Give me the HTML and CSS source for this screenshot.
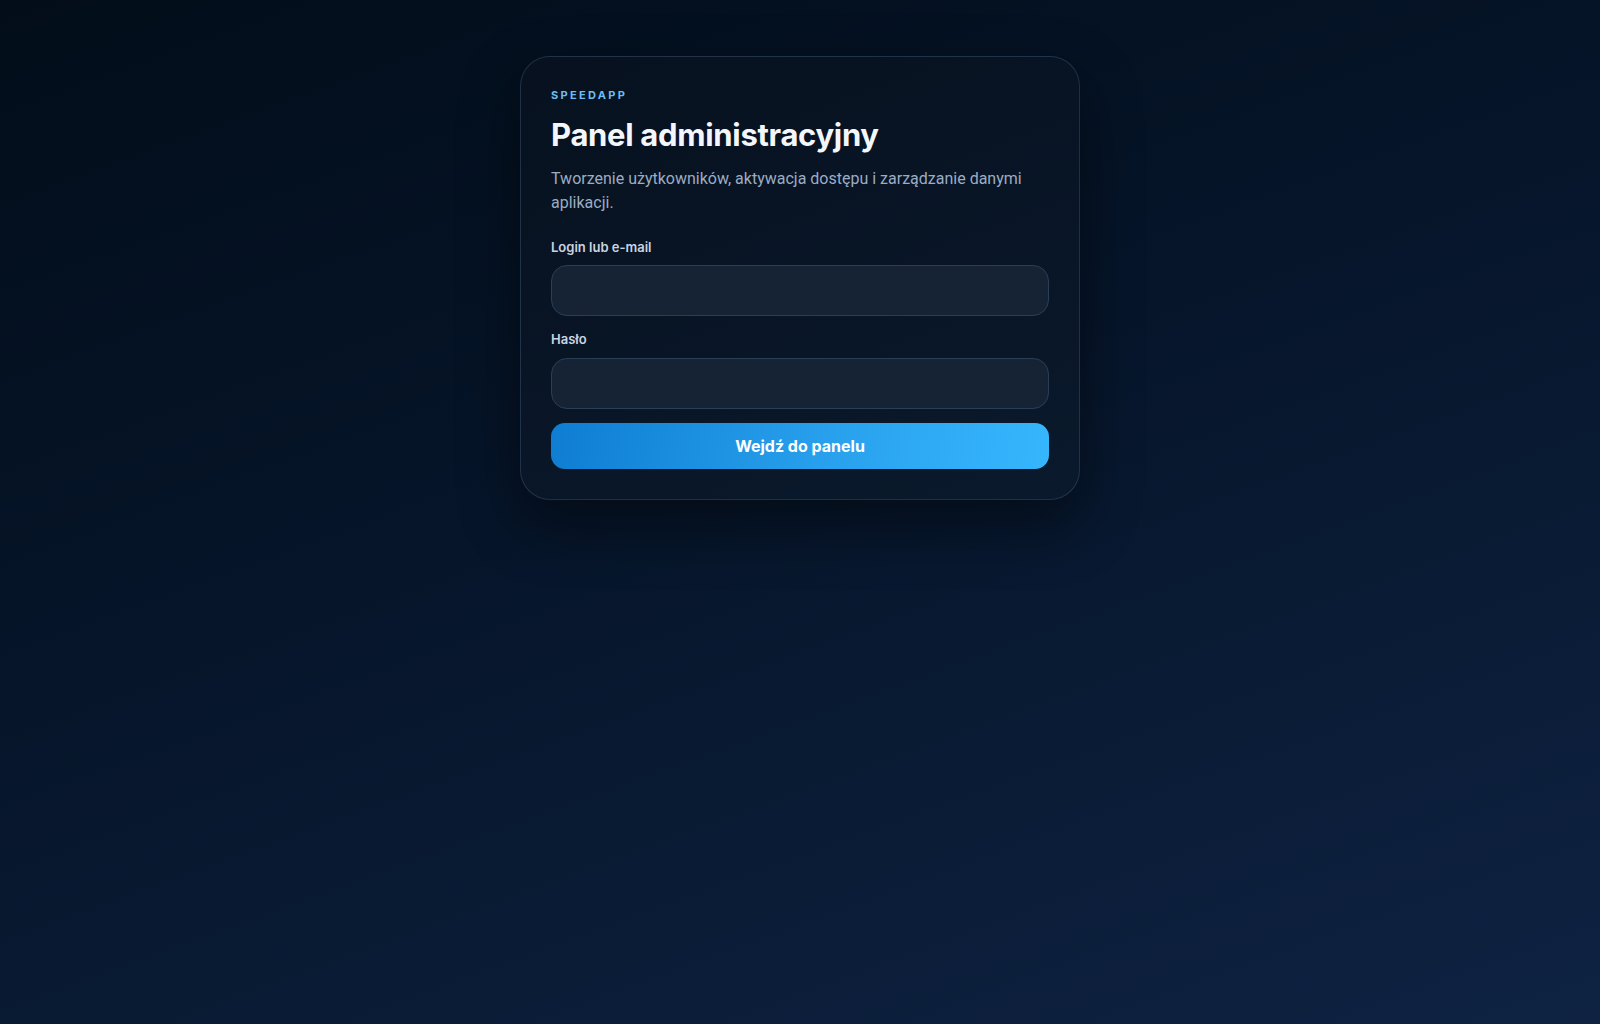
FILE: index.html
```html
<!DOCTYPE html>
<html lang="pl">
<head>
<meta charset="utf-8">
<title>SpeedApp – Panel administracyjny</title>
<link rel="stylesheet" href="styles.css">
</head>
<body>
<main class="page">
  <section class="card">
    <div class="eyebrow">SPEEDAPP</div>
    <h1 class="title">Panel administracyjny</h1>
    <p class="subtitle">Tworzenie użytkowników, aktywacja dostępu i zarządzanie danymi aplikacji.</p>
    <form class="form">
      <label class="field">
        <span class="label">Login lub e-mail</span>
        <input class="input" type="text">
      </label>
      <label class="field">
        <span class="label">Hasło</span>
        <input class="input" type="password">
      </label>
      <button class="button" type="button">Wejdź do panelu</button>
    </form>
  </section>
</main>
</body>
</html>
```
FILE: styles.css
```css
* { box-sizing: border-box; }
html, body { margin: 0; height: 100%; }
body {
  font-family: Inter, "Noto Sans", sans-serif;
  background: linear-gradient(160deg, #020d19 0%, #06152a 45%, #0e2242 100%);
  color: #f1f5fb;
}
.page {
  min-height: 100vh;
  display: flex;
  justify-content: center;
  align-items: flex-start;
  padding-top: 56px;
}
.card {
  width: 560px;
  padding: 30px;
  border: 1px solid rgba(120, 150, 190, 0.22);
  border-radius: 30px;
  background: linear-gradient(160deg, #07111f 0%, #0a192c 100%);
  box-shadow: 0 24px 60px rgba(0, 0, 0, 0.45);
}
.eyebrow {
  font-size: 11px;
  line-height: 16.5px;
  font-weight: 700;
  letter-spacing: 0.21em;
  color: #6dbdf5;
}
.title {
  margin: 13px 0 0;
  font-size: 31px;
  line-height: 36px;
  font-weight: 700;
  letter-spacing: -0.01em;
  color: #f3f7fc;
}
.subtitle {
  margin: 14px 0 0;
  font-family: Roboto, Inter, sans-serif;
  font-size: 16px;
  line-height: 24px;
  color: #9badc4;
}
.form {
  margin-top: 23px;
  display: flex;
  flex-direction: column;
  gap: 14px;
}
.field {
  display: flex;
  flex-direction: column;
  gap: 8px;
}
.label {
  font-size: 13px;
  line-height: 19.5px;
  font-weight: 600;
  color: #c9d4e2;
}
.input {
  height: 51px;
  width: 100%;
  border: 1px solid #2b3e58;
  border-radius: 16px;
  background: #152335;
  color: #f1f5fb;
  font: inherit;
  padding: 0 16px;
  outline: none;
}
.button {
  height: 46px;
  width: 100%;
  border: 0;
  border-radius: 14px;
  background: linear-gradient(100deg, #0e7dd2 0%, #2aa3ef 60%, #36b6fd 100%);
  color: #ffffff;
  font-family: Inter, "Noto Sans", sans-serif;
  font-size: 16px;
  font-weight: 700;
  cursor: pointer;
}
```
